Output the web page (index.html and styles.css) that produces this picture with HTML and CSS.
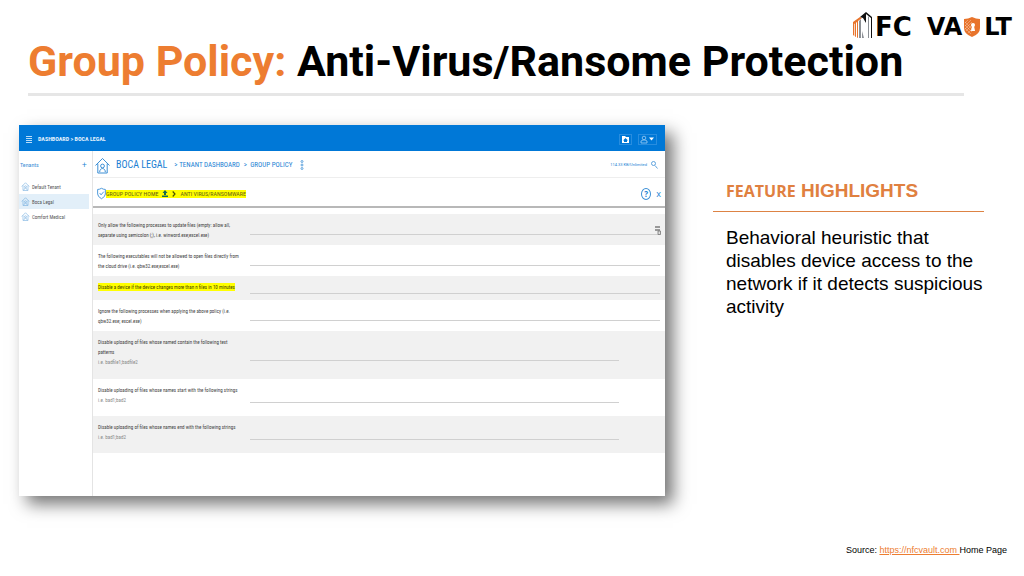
FILE: index.html
```html
<!DOCTYPE html>
<html lang="en">
<head>
<meta charset="utf-8">
<title>Group Policy</title>
<meta name="viewport" content="width=device-width, initial-scale=1">
<link rel="stylesheet" href="styles.css">
</head>
<body>
<svg class="defs" aria-hidden="true">
  <symbol id="house" viewBox="0 0 16 18"><path d="M.5 9 8 1.500 15.500 9M3 7v10h10V7M5 16c0-5 6-5 6 0" /><circle cx="8" cy="9.500" r="2"/></symbol>
</svg>
<div class="brand" role="img" aria-label="NFC Vault">
  <svg class="brand-building" viewBox="0 0 22 28" aria-hidden="true">
    <path fill="#e8742c" d="M1 11l7-5 2 1-4 3v17l-1-.5V11l-1 .7V26l-1-.5V12.500l-.7.5v12L1 24z"/>
    <path fill="#111" d="M8 6l6-5 6 5v21h-1V7l-5-4v9l-3-5z"/>
    <path fill="#8c9095" d="M7 10l2-2v19H7zM16 6l1-1v22h-1zM10 20l2 7h-2z"/>
  </svg>
  <span class="brand-fc">FC</span>
  <span>VA</span>
  <svg class="brand-shield" viewBox="0 0 18 20" aria-hidden="true">
    <path fill="#e8742c" d="M1 2q4 0 8-2 4 2 8 2v9q0 6-8 9-8-3-8-9z"/>
    <path stroke="#fff" stroke-width=".3" d="M2 6l3-3M2 9l6-6M2 12l7-7M3 14l6-6M5 16l4-4M2 5l7 7M2 8l7 7M2 11l6 6"/>
    <circle cx="10" cy="8" r="2" fill="#fff"/><path fill="#fff" d="M9 9h2l1 5H8z"/>
  </svg>
  <span>LT</span>
</div>
<header class="title"><h1><span class="accent">Group Policy:</span> Anti-Virus/Ransome Protection</h1></header>
<main class="content">
  <section class="app">
    <div class="app-bar">
      <button class="icon-btn" aria-label="Menu"><svg width="6" height="8" viewBox="0 0 6 8"><path d="M0 1.500h6M0 3.500h6M0 5.500h6M0 7.500h6" stroke="#b9dcf8"/></svg></button>
      <span class="app-path">DASHBOARD &gt; BOCA LEGAL</span>
      <button class="icon-btn boxed" aria-label="Files"><svg width="9" height="9" viewBox="0 0 9 9"><path fill="#fff" d="M1 1h3l1 1h3v6H1z"/><path fill="#0078d7" d="M4.500 3 7 5.500H6V7H3V5.500H2z"/></svg></button>
      <button class="icon-btn boxed" aria-label="Account"><svg width="15" height="9" viewBox="0 0 15 9"><g fill="none" stroke="#9fcdf3" stroke-width=".8"><circle cx="4" cy="3" r="1.800"/><path d="M1 8V6l2-1h2l2 1v2z"/></g><path fill="#fff" d="M9 2.500h5l-2.500 3z"/></svg></button>
    </div>
    <div class="app-body">
      <nav class="side" aria-label="Tenants">
        <div class="side-head"><span>Tenants</span><button class="icon-btn" aria-label="Add tenant">+</button></div>
        <a class="tenant" href="#"><svg class="house"><use href="#house"/></svg>Default Tenant</a>
        <a class="tenant active" href="#"><svg class="house"><use href="#house"/></svg>Boca Legal</a>
        <a class="tenant" href="#"><svg class="house"><use href="#house"/></svg>Comfort Medical</a>
      </nav>
      <div class="pane">
        <div class="crumbs">
          <svg class="house big"><use href="#house"/></svg>
          <strong class="tenant-name">BOCA LEGAL</strong>
          <span class="crumb">&gt;&nbsp;TENANT DASHBOARD</span><span class="crumb">&gt;&nbsp; GROUP POLICY</span>
          <button class="icon-btn more" aria-label="More"><svg width="4" height="10" viewBox="0 0 4 10" fill="none" stroke="#3c8fd6" stroke-width=".8"><circle cx="2" cy="1.500" r="1"/><circle cx="2" cy="5" r="1"/><circle cx="2" cy="8.500" r="1"/></svg></button>
          <span class="quota">114.33 KB/Unlimited</span>
          <button class="icon-btn" aria-label="Search"><svg width="7" height="8" viewBox="0 0 7 8" fill="none" stroke="#3c8fd6" stroke-width=".8"><circle cx="2.500" cy="2.500" r="2"/><path d="M4 4.500l2.500 3"/></svg></button>
        </div>
        <div class="policy-bar">
          <svg class="check" width="9" height="13" viewBox="0 0 10 13" fill="none" stroke="#3c8fd6"><path d="M5 .7q2 1.300 4.300 1.300v5q0 3-4.300 5.300Q.7 10 .7 7V2Q3 2 5 .7z"/><path d="M3 6l1.500 2L7.500 4.500"/></svg>
          <span class="policy-path"><span>GROUP POLICY HOME</span><svg width="6" height="7" viewBox="0 0 6 7"><path fill="#176a52" d="M3 0l2.500 3H4v2H2V3H.5zM0 5.500h6V7H0z"/></svg><svg width="4" height="6" viewBox="0 0 4 6"><path d="M.7.5l2.300 2.500L.7 5.500" fill="none" stroke="#4c5500" stroke-width="1.200"/></svg><span>ANTI VIRUS/RANSOMWARE</span></span>
          <button class="help" aria-label="Help">?</button>
          <button class="icon-btn close" aria-label="Close">x</button>
        </div>
        <form class="rules">
          <div class="rule"><label for="r1">Only allow the following processes to update files (empty: allow all,<br>separate using semicolon (;), i.e. winword.exe;excel.exe)</label><input id="r1" type="text"><svg class="list" width="6" height="9" viewBox="0 0 6 9"><path fill="#999" d="M0 0h5v2H0zM0 3h5v2H0z"/><path fill="#ddd" stroke="#777" stroke-width=".8" d="M3 5h2.500v3.500H3z"/></svg></div>
          <div class="rule"><label for="r2">The following executables will not be allowed to open files directly from<br>the cloud drive (i.e. qbw32.exe;excel.exe)</label><input id="r2" type="text"></div>
          <div class="rule one"><label for="r3"><mark>Disable a device if the device changes more than n files in 10 minutes</mark></label><input id="r3" type="text"></div>
          <div class="rule"><label for="r4">Ignore the following processes when applying the above policy (i.e.<br>qbw32.exe; excel.exe)</label><input id="r4" type="text"></div>
          <div class="rule tall short"><label for="r5">Disable uploading of files whose named contain the following text<br>patterns<small>i.e. badfile1;badfile2</small></label><input id="r5" type="text"></div>
          <div class="rule mid short"><label for="r6">Disable uploading of files whose names start with the following strings<small>i.e. bad1;bad2</small></label><input id="r6" type="text"></div>
          <div class="rule mid short"><label for="r7">Disable uploading of files whose names end with the following strings<small>i.e. bad1;bad2</small></label><input id="r7" type="text"></div>
        </form>
      </div>
    </div>
  </section>
  <aside class="features">
    <h2><span class="feature-word">FEATURE</span> HIGHLIGHTS</h2>
    <p>Behavioral heuristic that disables device access to the network if it detects suspicious activity</p>
  </aside>
</main>
<footer class="source">Source: <a href="https://nfcvault.com">https://nfcvault.com </a>Home Page</footer>
</body>
</html>
```
FILE: styles.css
```css
* { box-sizing: border-box; }
body {
  margin: 0;
  min-height: 100vh;
  display: flex;
  flex-direction: column;
  background: #fff;
  color: #000;
  font-family: "Liberation Sans", Arial, sans-serif;
}
.defs { position: absolute; width: 0; height: 0; }
.brand {
  display: flex;
  align-items: center;
  justify-content: flex-end;
  height: 40px;
  padding: 14px 12px 0 0;
  font: bold 24px/24px "DejaVu Sans", sans-serif;
}
.brand-building { width: 24px; height: 28px; margin-top: -4px; }
.brand-fc { margin-right: 15px; font-size: 26px; }
.brand-shield { width: 18px; height: 20px; margin: 0 3px 0 1px; }
.title {
  margin: 0 60px 0 28px;
  padding-bottom: 11px;
  border-bottom: 3px solid #e6e6e6;
}
h1 { margin: 0; font: bold 43px/42px Roboto, sans-serif; white-space: nowrap; }
.accent { color: #ed7d31; }
.content {
  flex: 1;
  display: grid;
  grid-template-columns: 646fr 271fr;
  column-gap: 48px;
  align-items: start;
  padding: 29px 40px 0 19px;
}
.app {
  background: #fff;
  box-shadow: 8px 8px 16px rgba(0, 0, 0, .55);
  font-family: "Roboto Condensed", "Liberation Sans Narrow", Roboto, sans-serif;
  font-size: 5px;
  line-height: 10px;
  color: #444;
}
.icon-btn {
  display: flex;
  align-items: center;
  justify-content: center;
  padding: 0;
  border: 0;
  background: none;
  color: #1b7fd3;
  font: 9px/10px "Open Sans", sans-serif;
}
.app-bar {
  display: flex;
  align-items: center;
  gap: 6px;
  height: 26px;
  padding: 2px 8px 0 7px;
  background: #0078d7;
  color: #e4f2fd;
  font-size: 6px;
  font-weight: bold;
}
.app-path { margin-right: auto; }
.boxed { height: 11px; padding: 0 1px; border: 1px solid #288ddf; }
.app-body { display: grid; grid-template-columns: 74px 1fr; }
.side { border-right: 1px solid #e4e4e4; padding-top: 9px; }
.side-head {
  display: flex;
  justify-content: space-between;
  padding: 0 5px 0 1px;
  margin-bottom: 9px;
  color: #3c8fd6;
  font-size: 6px;
}
.tenant {
  display: flex;
  align-items: center;
  gap: 2px;
  height: 15px;
  margin-right: 3px;
  padding-left: 2px;
  color: #555;
  text-decoration: none;
}
.active { background: #e2eff9; }
.house { width: 9px; height: 9px; fill: none; stroke: #5a9fd9; }
.big { width: 15px; height: 17px; stroke: #2e86d1; }
.crumbs {
  display: flex;
  align-items: center;
  height: 27px;
  padding: 2px 7px 0 2px;
  border-bottom: 1px solid #eee;
  color: #1b7fd3;
}
.tenant-name { margin: 0 7px 0 6px; font-size: 10px; font-weight: normal; }
.crumb { margin-right: 4px; font-size: 7px; }
.more { margin-left: 4px; }
.quota { margin: 0 4px 0 auto; font-family: Roboto, sans-serif; font-size: 4px; }
.policy-bar {
  display: flex;
  align-items: center;
  height: 30px;
  padding: 3px 4px 0;
  border-bottom: 2px solid #b8b8b8;
}
.policy-path {
  display: flex;
  align-items: center;
  gap: 4px;
  margin-right: auto;
  height: 8px;
  background: #ff0;
  color: #665e10;
  font-size: 6px;
}
.help {
  width: 10px;
  height: 12px;
  margin-right: 5px;
  padding: 0;
  border: 1px solid #3c8fd6;
  border-radius: 50%;
  background: none;
  color: #1b7fd3;
  font: bold 8px/8px "Open Sans", sans-serif;
}
.rules { padding: 6px 0 43px; }
.rule {
  position: relative;
  display: grid;
  grid-template-columns: 152px 1fr;
  align-items: start;
  min-height: 31px;
  padding: 0 5px;
}
.rule:nth-child(odd) { background: #f1f1f1; }
.rule label { padding-top: 6px; white-space: nowrap; }
.rule small { display: block; font-size: inherit; color: #888; }
.rule input {
  width: 100%;
  height: 21px;
  padding: 0;
  border: 0;
  border-bottom: 1px solid #d0d0d0;
  background: none;
  font: inherit;
}
.one { min-height: 24px; }
.one input { height: 18px; }
.tall { min-height: 48px; }
.tall input { height: 30px; }
.mid { min-height: 37px; }
.mid input { height: 24px; }
.short { padding-right: 46px; }
.list { position: absolute; right: 4px; top: 12px; }
mark { padding: 1px 0; background: #ff0; color: #443f00; }
.features { padding-top: 53px; }
h2 {
  margin: 0 0 14px;
  padding: 0 0 7px 13px;
  border-bottom: 1px solid #dd8344;
  color: #e08040;
  font-size: 19px;
  line-height: 25px;
}
.feature-word { font-family: "Open Sans", sans-serif; font-size: 16px; }
.features p { margin: 0 -4px 0 13px; font-size: 19px; line-height: 23px; }
.source { padding: 0 17px 20px; font-size: 9px; line-height: 11px; text-align: right; }
.source a { color: #ed7d31; white-space: pre; }
```
